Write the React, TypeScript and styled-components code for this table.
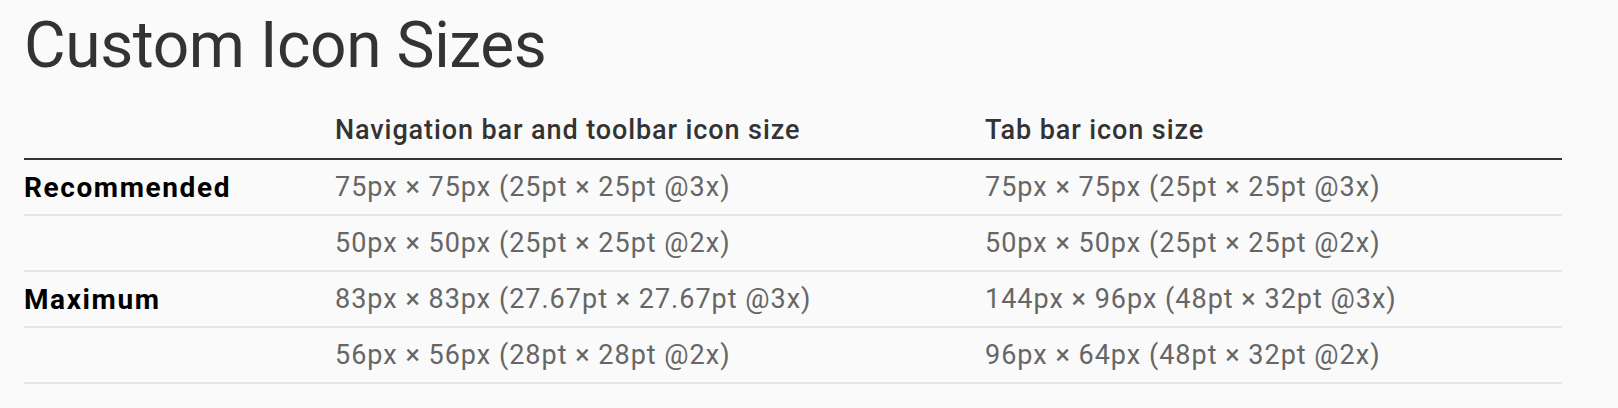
import React from "react";
import styled, { createGlobalStyle } from "styled-components";

const Global = createGlobalStyle`
  html, body {
    margin: 0;
    padding: 0;
    background: #fafafa;
  }
  body {
    font-family: Roboto, "Liberation Sans", sans-serif;
    -webkit-font-smoothing: antialiased;
  }
`;

const Page = styled.main`
  padding: 14px 56px 0 24px;
`;

const Title = styled.h1`
  margin: 0;
  font-size: 64px;
  line-height: 64px;
  font-weight: 400;
  letter-spacing: -0.4px;
  color: #333;
`;

const Table = styled.div`
  display: flex;
  flex-direction: column;
  width: 1538px;
  margin-top: 39px;
`;

const Row = styled.div<{ $head?: boolean }>`
  display: grid;
  grid-template-columns: 311px 650px 1fr;
  align-items: ${(p) => (p.$head ? "end" : "center")};
  height: ${(p) => (p.$head ? "auto" : "54px")};
  padding-bottom: ${(p) => (p.$head ? "14px" : "0")};
  border-bottom: 2px solid ${(p) => (p.$head ? "#333" : "#e5e5e5")};
`;

const Cell = styled.div<{ $kind: "head" | "label" | "data" }>`
  font-size: ${(p) => (p.$kind === "label" ? "28px" : "27px")};
  line-height: 27px;
  white-space: nowrap;
  font-weight: ${(p) => (p.$kind === "head" ? 500 : p.$kind === "label" ? 700 : 400)};
  letter-spacing: ${(p) => (p.$kind === "head" ? "0.9px" : p.$kind === "label" ? "1.6px" : "1px")};
  color: ${(p) => (p.$kind === "head" ? "#333" : p.$kind === "label" ? "#000" : "#666")};
`;

const rows: [string, string, string][] = [
  ["Recommended", "75px × 75px (25pt × 25pt @3x)", "75px × 75px (25pt × 25pt @3x)"],
  ["", "50px × 50px (25pt × 25pt @2x)", "50px × 50px (25pt × 25pt @2x)"],
  ["Maximum", "83px × 83px (27.67pt × 27.67pt @3x)", "144px × 96px (48pt × 32pt @3x)"],
  ["", "56px × 56px (28pt × 28pt @2x)", "96px × 64px (48pt × 32pt @2x)"],
];

export default function App() {
  return (
    <>
      <Global />
      <Page>
        <Title>Custom Icon Sizes</Title>
        <Table>
          <Row $head>
            <Cell $kind="head" />
            <Cell $kind="head">Navigation bar and toolbar icon size</Cell>
            <Cell $kind="head">Tab bar icon size</Cell>
          </Row>
          {rows.map((r, i) => (
            <Row key={i}>
              <Cell $kind="label">{r[0]}</Cell>
              <Cell $kind="data">{r[1]}</Cell>
              <Cell $kind="data">{r[2]}</Cell>
            </Row>
          ))}
        </Table>
      </Page>
    </>
  );
}
